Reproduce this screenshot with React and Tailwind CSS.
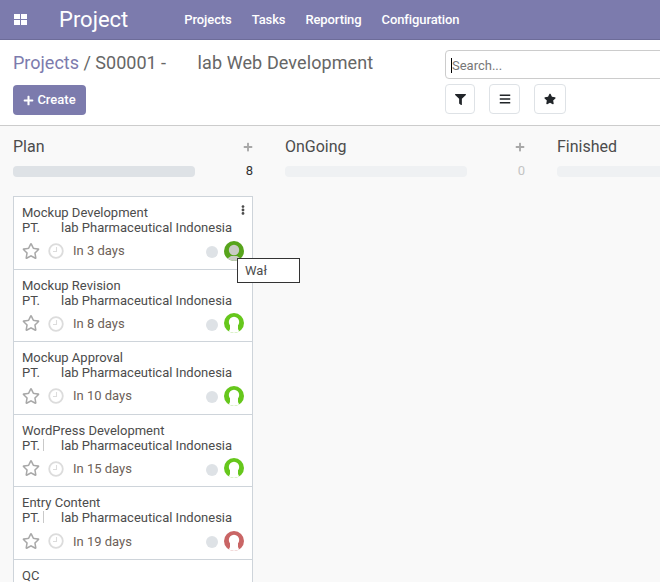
import React from 'react';
import { FaPlus, FaFilter, FaBars, FaStar, FaRegStar, FaEllipsisV } from 'react-icons/fa';

const tasks = [
  { title: 'Mockup Development', due: 'In 3 days', avatar: '#57a41c', photo: true, menu: true },
  { title: 'Mockup Revision', due: 'In 8 days', avatar: '#66c71c' },
  { title: 'Mockup Approval', due: 'In 10 days', avatar: '#66c71c' },
  { title: 'WordPress Development', due: 'In 15 days', avatar: '#66c71c', sliver: true },
  { title: 'Entry Content', due: 'In 19 days', avatar: '#c96565', sliver: true },
];

function Avatar({ color, photo }) {
  const fill = photo ? '#c9cbc6' : '#fff';
  return (
    <svg viewBox="0 0 20 20" className="w-5 h-5 rounded-full mt-[-1px]" style={{ backgroundColor: color }}>
      <circle cx="10" cy="9" r="5.2" fill={fill} />
      <path d={photo ? 'M2 20c1-3 4-4 5-5h6c1 1 4 2 5 5z' : 'M6 12h8v4l2 4H4l2-4z'} fill={fill} />
    </svg>
  );
}

function Clock() {
  return (
    <svg viewBox="0 0 16 16" className="w-4 h-4" fill="none" stroke="#dcdcdc">
      <circle cx="8" cy="8" r="6.8" strokeWidth="1.8" />
      <path d="M8.5 4v4.5H5" strokeWidth="1.1" />
    </svg>
  );
}

function TaskCard({ task }) {
  return (
    <div className="relative h-[72.6px] border-b border-[#ced4da] pl-2 pr-2 pt-[8px]">
      {task.menu && <FaEllipsisV className="absolute right-[4px] top-[8px] text-[#4c4c4c] text-[10px]" />}
      <div className="text-[13px] leading-[15px] text-[#4c4c4c] whitespace-nowrap">{task.title}</div>
      <div className="text-[13px] leading-[15px] text-[#4c4c4c] whitespace-nowrap flex">
        <span>PT.</span>
        <span className="w-[21px] relative">
          {task.sliver && <span className="absolute left-[3px] top-[1px] h-[12px] w-px bg-[#c9c9c9]" />}
        </span>
        <span className="ml-[-1px] pl-[1px]">lab Pharmaceutical Indonesia</span>
      </div>
      <div className="flex items-center mt-[6px] h-[20px]">
        <FaRegStar className="text-[#a8a8a8] text-[18px] mt-[-1px]" />
        <span className="ml-[8px]"><Clock /></span>
        <span className="ml-[9px] text-[13px] text-[#6d5f58] whitespace-nowrap">{task.due}</span>
        <div className="ml-auto flex items-center gap-[6px]">
          <span className="w-3 h-3 rounded-full bg-[#dee2e6] mt-[2px]" />
          <Avatar color={task.avatar} photo={task.photo} />
        </div>
      </div>
    </div>
  );
}

function ColumnHeader({ title, count, faded, barColor }) {
  return (
    <div className="w-[240px] shrink-0">
      <div className="flex items-center justify-between h-[20px]">
        <span className="text-[16px] text-[#4c4c4c]">{title}</span>
        <FaPlus className="text-[#a8a8a8] text-[10px]" />
      </div>
      <div className="flex items-center mt-[8px] h-[12px]">
        <div className="w-[182px] h-[11px] rounded" style={{ backgroundColor: barColor }} />
        <span className={`ml-auto text-[13px] ${faded ? 'text-[#c4c4c4]' : 'text-[#333333]'}`}>{count}</span>
      </div>
    </div>
  );
}

export default function App() {
  return (
    <div className="w-[660px] h-[582px] overflow-hidden bg-white" style={{ fontFamily: 'Roboto, sans-serif' }}>
      {/* barra superior */}
      <nav className="h-10 bg-[#7c7bad] border-b border-[#6d6c99] flex items-center text-white">
        {/* icono de apps: cuatro bloques */}
        <div className="ml-[14px] grid grid-cols-2 gap-px w-[13px] h-[11px]">
          <span className="bg-white" />
          <span className="bg-white" />
          <span className="bg-white" />
          <span className="bg-white" />
        </div>
        <span className="ml-[32px] text-[22px] leading-none">Project</span>
        <div className="ml-[56px] flex gap-[20px] text-[13px] font-medium tracking-[-0.1px]">
          <span>Projects</span>
          <span>Tasks</span>
          <span>Reporting</span>
          <span>Configuration</span>
        </div>
      </nav>

      {/* panel de control */}
      <div className="h-[86px] border-b border-[#cccccc] flex">
        <div className="pl-[13px] w-[445px] shrink-0">
          <div className="pt-[9px] h-[45px] text-[18px] text-[#666666] whitespace-nowrap">
            <span className="text-[#7c7bad]">Projects</span>
            <span> / S00001 - </span>
            <span className="inline-block w-[27px]" />
            <span className="tracking-[0.1px]">lab Web Development</span>
          </div>
          <button className="h-[30px] w-[73px] justify-center rounded bg-[#7c7bad] text-white text-[13px] font-medium flex items-center gap-[3px]">
            <FaPlus className="text-[11px]" />
            Create
          </button>
        </div>
        <div className="pt-[10px]">
          <div className="w-[260px] h-[29px] rounded border border-[#cccccc] flex items-center pl-[5px] pt-[2px] text-[13px] text-[#777777]">
            <span className="w-px h-[15px] bg-black" />
            Search...
          </div>
          <div className="flex mt-[5px]">
            <div className="w-[30px] h-[30px] border border-[#dee2e6] rounded-sm flex items-center justify-center text-[#212529] text-[11px]"><FaFilter /></div>
            <div className="ml-[14px] w-[31px] h-[30px] border border-[#dee2e6] rounded-sm flex items-center justify-center text-[#212529] text-[12px]"><FaBars /></div>
            <div className="ml-[14px] w-[32px] h-[30px] border border-[#dee2e6] rounded-sm flex items-center justify-center text-[#212529] text-[12px]"><FaStar /></div>
          </div>
        </div>
      </div>

      {/* kanban */}
      <div className="relative h-[456px] bg-[#f9f9f9] pt-[11px] pl-[13px] overflow-hidden">
        <div className="flex gap-[32px]">
          <ColumnHeader title="Plan" count="8" barColor="#dee2e6" />
          <ColumnHeader title="OnGoing" count="0" faded barColor="#eff1f3" />
          <ColumnHeader title="Finished" faded barColor="#eff1f3" />
        </div>
        <div className="w-[240px] mt-[19px] bg-white border border-[#ced4da] border-b-0 h-[400px]">
          {tasks.map((task) => (
            <TaskCard key={task.title} task={task} />
          ))}
          <div className="pl-2 pt-[8px] text-[13px] leading-[15px] text-[#4c4c4c]">QC</div>
        </div>
        <div className="absolute left-[237px] top-[132px] w-[63px] h-[25px] bg-white border border-[#333333] text-[13px] text-[#4c4c4c] pl-[7px] leading-[23px]">
          Wał
        </div>
      </div>
    </div>
  );
}
